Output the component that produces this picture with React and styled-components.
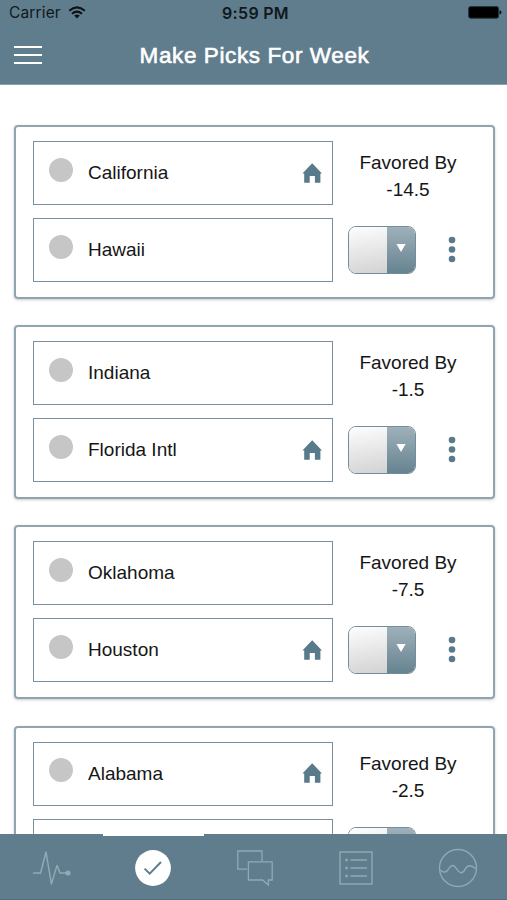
import React from "react";
import styled, { createGlobalStyle } from "styled-components";

const COLORS = {
  primary: "#607d8d",
  primaryDark: "#526f7e",
  outline: "#91a5b0",
  rowOutline: "#7890a0",
  icon: "#597a8a",
  tabIcon: "#8faab5",
  text: "#161616",
  radio: "#c6c6c6",
};

const GAMES = [
  { away: "California", home: "Hawaii", host: "away", spread: "-14.5" },
  { away: "Indiana", home: "Florida Intl", host: "home", spread: "-1.5" },
  { away: "Oklahoma", home: "Houston", host: "home", spread: "-7.5" },
  { away: "Alabama", home: "", host: "away", spread: "-2.5" },
];

const WifiIcon = () => (
  <svg width="18" height="13" viewBox="0 0 18 13" fill="none" stroke="#0c1114">
    <path d="M1.2 4.8 Q9 -2 16.8 4.8" strokeWidth="2" />
    <path d="M4 7.8 Q9 3.4 14 7.8" strokeWidth="2" />
    <path d="M9 12.4 L6.2 9.6 Q9 7.4 11.8 9.6 Z" fill="#0c1114" stroke="none" />
  </svg>
);

const BatteryIcon = () => (
  <svg width="34" height="13" viewBox="0 0 34 13">
    <rect x="0.6" y="0.6" width="30" height="11.6" rx="2" fill="#000" stroke="#26343c" strokeWidth="1" />
    <path d="M31.6 4.2 Q33.4 4.8 33.4 6.4 T31.6 8.6 Z" fill="#000" />
  </svg>
);

const HomeIcon = () => (
  <svg width="20" height="20" viewBox="0 0 20 20" fill={COLORS.icon}>
    <path d="M10.2 0.2 L20 10.4 H18.4 V19.8 H12.9 V13 H7.7 V19.8 H2.2 V10.4 H0.4 Z" />
  </svg>
);

const DotsIcon = () => (
  <svg width="8" height="27" viewBox="0 0 8 27" fill={COLORS.icon}>
    <circle cx="4" cy="4" r="3.3" />
    <circle cx="4" cy="13.5" r="3.3" />
    <circle cx="4" cy="23" r="3.3" />
  </svg>
);

const PulseIcon = () => (
  <svg width="40" height="36" viewBox="0 0 40 36" fill="none" stroke={COLORS.tabIcon} strokeWidth="1.5">
    <path d="M1 23 H8.6 L14 2 L19.4 34 L25 15.4 L28 23 H35" strokeLinejoin="round" />
    <circle cx="36" cy="23" r="2.6" fill={COLORS.tabIcon} stroke="none" />
  </svg>
);

const CheckIcon = () => (
  <svg width="36" height="36" viewBox="0 0 36 36" fill="none">
    <circle cx="18" cy="18" r="17.9" fill="#fff" />
    <path d="M9.6 18.6 L14.7 23.6 L26 12" stroke={COLORS.primary} strokeWidth="2" />
  </svg>
);

const ChatIcon = () => (
  <svg width="36" height="36" viewBox="0 0 36 36" fill="none" stroke={COLORS.tabIcon} strokeWidth="1.3">
    <path d="M10.2 19.2 H0.8 V1 H25 V11" />
    <path d="M11.4 11.8 H35.2 V30 H31.4 V35 L25.6 30 H11.4 Z" />
  </svg>
);

const ListIcon = () => (
  <svg width="34" height="34" viewBox="0 0 34 34" fill="none" stroke={COLORS.tabIcon} strokeWidth="1.4">
    <rect x="1" y="1" width="32" height="32" />
    <path d="M11.5 9 H28 M11.5 17 H28 M11.5 25 H28" />
    <g fill={COLORS.tabIcon} stroke="none">
      <circle cx="7.5" cy="9" r="1.4" />
      <circle cx="7.5" cy="17" r="1.4" />
      <circle cx="7.5" cy="25" r="1.4" />
    </g>
  </svg>
);

const WaveIcon = () => (
  <svg width="40" height="40" viewBox="0 0 40 40" fill="none" stroke={COLORS.tabIcon} strokeWidth="1.4">
    <circle cx="20" cy="20" r="18.5" />
    <path d="M2.5 22 C5.5 25.5 8.5 24.5 10.8 20.6 S15.6 16.4 18.4 20.6 S24 27 27 21.4 S33.5 17.6 37.5 20.5" />
  </svg>
);

const TABS = [
  { id: "activity", Icon: PulseIcon },
  { id: "picks", Icon: CheckIcon },
  { id: "chat", Icon: ChatIcon },
  { id: "standings", Icon: ListIcon },
  { id: "trends", Icon: WaveIcon },
];

const Team = ({ name, isHome }) => (
  <TeamRow>
    <Radio />
    <TeamName>{name}</TeamName>
    {isHome && <HomeIcon />}
  </TeamRow>
);

const GameCard = ({ game }) => (
  <Card>
    <Teams>
      <Team name={game.away} isHome={game.host === "away"} />
      <Team name={game.home} isHome={game.host === "home"} />
    </Teams>
    <Side>
      <Favored>
        <span>Favored By</span>
        <span>{game.spread}</span>
      </Favored>
      <Controls>
        <Select>
          <SelectValue />
          <SelectArrow>
            <svg width="10" height="8" viewBox="0 0 10 8" fill="#fff">
              <path d="M0.4 0 H9.6 L5 8 Z" />
            </svg>
          </SelectArrow>
        </Select>
        <MoreButton aria-label="More">
          <DotsIcon />
        </MoreButton>
      </Controls>
    </Side>
  </Card>
);

const App = () => {
  const [activeTab, setActiveTab] = React.useState("picks");

  return (
    <>
      <GlobalStyle />
      <Screen>
        <Header>
          <StatusBar>
            <Carrier>
              Carrier
              <WifiIcon />
            </Carrier>
            <Time>9:59 PM</Time>
            <Battery>
              <BatteryIcon />
            </Battery>
          </StatusBar>
          <TitleBar>
            <MenuButton aria-label="Menu">
              <MenuLine />
              <MenuLine />
              <MenuLine />
            </MenuButton>
            <Title>Make Picks For Week</Title>
          </TitleBar>
        </Header>
        <Games>
          {GAMES.map((game) => (
            <GameCard key={game.away} game={game} />
          ))}
        </Games>
        <TabBar>
          {TABS.map(({ id, Icon }) => (
            <Tab
              key={id}
              aria-label={id}
              $active={id === activeTab}
              onClick={() => setActiveTab(id)}
            >
              <Icon />
            </Tab>
          ))}
        </TabBar>
      </Screen>
    </>
  );
};

const GlobalStyle = createGlobalStyle`
  * {
    box-sizing: border-box;
  }

  body {
    margin: 0;
    font-family: "Liberation Sans", Arial, sans-serif;
    color: ${COLORS.text};
  }

  svg {
    display: block;
    flex-shrink: 0;
  }

  button {
    border: none;
    padding: 0;
    background: none;
  }
`;

const Screen = styled.div`
  display: flex;
  flex-direction: column;
  width: 507px;
  height: 900px;
  overflow: hidden;
  background: #fff;
`;

const Header = styled.header`
  flex-shrink: 0;
  height: 85px;
  background: ${COLORS.primary};
  border-bottom: 1px solid #8ba0ac;
`;

const StatusBar = styled.div`
  display: grid;
  grid-template-columns: 1fr auto 1fr;
  align-items: center;
  height: 25px;
  padding: 0 5px 0 9px;
  font-family: Inter, sans-serif;
  font-size: 16px;
  color: #10181c;
`;

const Carrier = styled.div`
  display: flex;
  align-items: center;
  gap: 7px;
  font-size: 15.5px;
  letter-spacing: 0.15px;
`;

const Time = styled.div`
  font-weight: 600;
  letter-spacing: 0.3px;
`;

const Battery = styled.div`
  display: flex;
  justify-content: flex-end;
`;

const TitleBar = styled.div`
  display: grid;
  grid-template-columns: 28px 1fr 28px;
  align-items: center;
  height: 60px;
  padding: 0 12px 0 14px;
`;

const MenuButton = styled.button`
  display: flex;
  flex-direction: column;
  gap: 6px;
`;

const MenuLine = styled.span`
  width: 28px;
  height: 2px;
  background: #fff;
`;

const Title = styled.h1`
  margin: 0;
  padding-top: 2px;
  text-align: center;
  font-size: 22.5px;
  font-weight: 400;
  line-height: 28px;
  letter-spacing: 0.6px;
  white-space: nowrap;
  color: #fff;
  -webkit-text-stroke: 0.6px #fff;
`;

const Games = styled.main`
  flex: 1;
  min-height: 0;
  display: flex;
  flex-direction: column;
  gap: 26.2px;
  padding: 40px 12px 0 14px;
  overflow: hidden;
`;

const Card = styled.section`
  flex-shrink: 0;
  display: flex;
  height: 174px;
  padding: 14px 14px 14px 17px;
  border: 2px solid ${COLORS.outline};
  border-radius: 4px;
  box-shadow: 0 1px 3px rgba(0, 0, 0, 0.22);
`;

const Teams = styled.div`
  display: flex;
  flex-direction: column;
  gap: 13px;
  width: 300px;
`;

const TeamRow = styled.div`
  display: flex;
  align-items: center;
  height: 64px;
  padding: 0 10px 1px 15px;
  border: 1px solid ${COLORS.rowOutline};
`;

const Radio = styled.span`
  width: 24px;
  height: 24px;
  margin-bottom: 6px;
  border-radius: 50%;
  background: ${COLORS.radio};
`;

const TeamName = styled.span`
  flex: 1;
  margin-left: 15px;
  padding-top: 1px;
  font-size: 19px;
`;

const Side = styled.div`
  flex: 1;
  display: flex;
  flex-direction: column;
  padding-left: 15px;
`;

const Favored = styled.div`
  display: flex;
  flex-direction: column;
  align-items: center;
  width: 120px;
  padding-top: 8px;
  font-size: 19px;
  line-height: 27px;
`;

const Controls = styled.div`
  display: flex;
  align-items: center;
  gap: 32px;
  margin-top: 23px;
`;

const Select = styled.div`
  display: flex;
  width: 68px;
  height: 48px;
  border: 1px solid #738e9b;
  border-radius: 8px;
  overflow: hidden;
`;

const SelectValue = styled.div`
  flex: 1;
  background: linear-gradient(170deg, #fdfdfd, #d2d2d2);
`;

const SelectArrow = styled.div`
  display: flex;
  justify-content: center;
  width: 28px;
  padding-top: 17px;
  background: linear-gradient(#9fb1ba, #668390);
`;

const MoreButton = styled.button`
  margin-bottom: 2px;
`;

const TabBar = styled.nav`
  flex-shrink: 0;
  display: grid;
  grid-template-columns: repeat(5, 101.5px);
  height: 66px;
  padding-left: 1px;
  background: ${COLORS.primary};
  border-bottom: 1px solid ${COLORS.primaryDark};
`;

const Tab = styled.button`
  display: flex;
  align-items: center;
  justify-content: center;
  border-top: 2px solid ${(p) => (p.$active ? "#fff" : "transparent")};
`;

export default App;
